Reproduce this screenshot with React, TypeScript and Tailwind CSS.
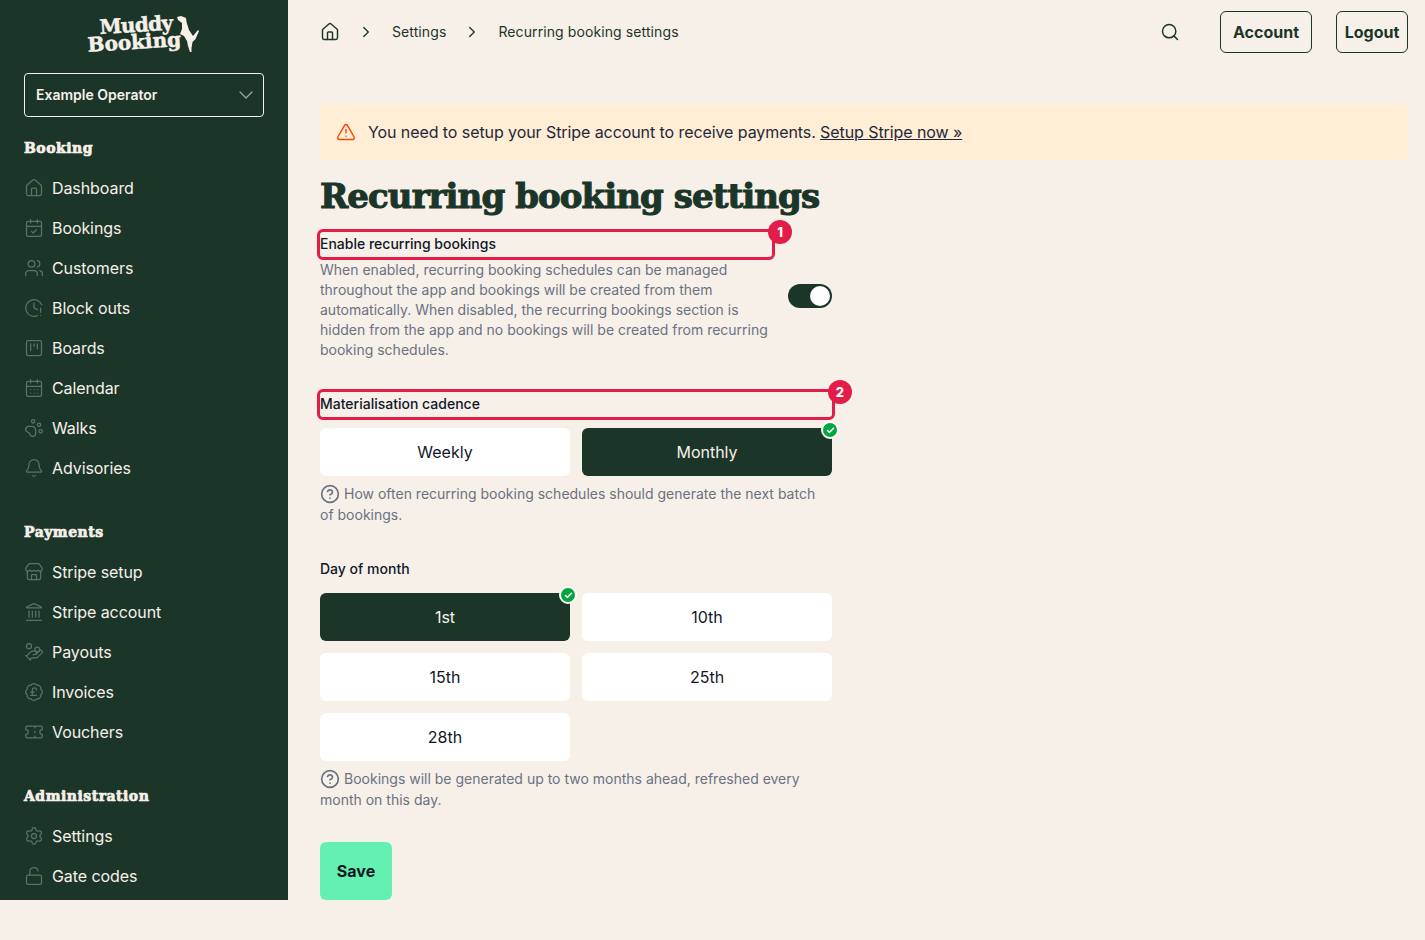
import {
  House,
  CalendarCheck,
  Users,
  ClockAlert,
  CalendarDays,
  PawPrint,
  Bell,
  Store,
  Landmark,
  HandCoins,
  BadgePoundSterling,
  Ticket,
  Settings,
  LockOpen,
  ChevronDown,
  ChevronRight,
  Search,
  TriangleAlert,
  CircleHelp,
  Check,
} from "lucide-react";

const displayFont = "font-['DejaVu_Serif',serif] font-bold";

function BoardIcon({ className }: { className?: string }) {
  return (
    <svg viewBox="0 0 24 24" fill="none" stroke="currentColor" strokeWidth="1.5" strokeLinecap="round" className={className}>
      <rect x="3" y="3" width="18" height="18" rx="2" />
      <path d="M8 7v8M12 7v3M16 7v6" />
    </svg>
  );
}

const sections = [
  {
    title: "Booking",
    items: [
      { label: "Dashboard", icon: House },
      { label: "Bookings", icon: CalendarCheck },
      { label: "Customers", icon: Users },
      { label: "Block outs", icon: ClockAlert },
      { label: "Boards", icon: BoardIcon },
      { label: "Calendar", icon: CalendarDays },
      { label: "Walks", icon: PawPrint },
      { label: "Advisories", icon: Bell },
    ],
  },
  {
    title: "Payments",
    items: [
      { label: "Stripe setup", icon: Store },
      { label: "Stripe account", icon: Landmark },
      { label: "Payouts", icon: HandCoins },
      { label: "Invoices", icon: BadgePoundSterling },
      { label: "Vouchers", icon: Ticket },
    ],
  },
  {
    title: "Administration",
    items: [
      { label: "Settings", icon: Settings },
      { label: "Gate codes", icon: LockOpen },
    ],
  },
];

function Logo() {
  return (
    <div className="flex h-[73px] items-center justify-center">
      <div className="relative h-[42px] w-[114px] text-[#f7f0e9]">
        <div className={`${displayFont} absolute left-0 top-[1px] -rotate-[3.5deg] text-[20px] leading-[17px] [-webkit-text-stroke:0.5px_#f7f0e9]`}>
          <div className="pl-[13px] tracking-[-0.7px]">Muddy</div>
          <div>Booking</div>
        </div>
        <svg viewBox="0 0 40 48" className="absolute left-[82px] top-[-6px] h-[48px] w-[40px]" fill="currentColor">
          <path d="M8 7 L12 6 L17 8 L17.500 12 L20 20 L24 26 L29 20 L30 21 L26.500 29 L23.500 32 L22.500 38 L22.500 42 L21 42 L19 36 L18 31 L15 26 L11 24 L13 19 L13 13 L9 10 Z" />
        </svg>
      </div>
    </div>
  );
}

function Sidebar() {
  return (
    <aside className="h-[900px] w-[288px] shrink-0 overflow-hidden bg-[#1b3629] px-6">
      <Logo />
      <div className="flex h-[44px] items-center justify-between rounded border border-[#f7f0e9] pl-[11px] pr-[5px]">
        <span className="text-sm font-semibold text-[#f7f0e9]">Example Operator</span>
        <ChevronDown className="size-6 text-[#9aa7a0]" strokeWidth={1.25} />
      </div>
      <div className="mt-[19px] flex flex-col gap-8">
        {sections.map((section) => (
          <div key={section.title}>
            <h3 className={`${displayFont} mb-2 flex h-6 items-center text-[14px] tracking-[0.5px] text-[#f7f0e9] [-webkit-text-stroke:0.7px_#f7f0e9]`}>
              {section.title}
            </h3>
            {section.items.map((item) => {
              const Icon = item.icon;
              return (
                <div key={item.label} className="flex h-10 items-center gap-2 text-base tracking-[-0.08px] text-[#f7f0e9]">
                  <Icon className="size-5 text-[#5a7367]" strokeWidth={1.5} />
                  <span>{item.label}</span>
                </div>
              );
            })}
          </div>
        ))}
      </div>
    </aside>
  );
}

function Header() {
  return (
    <header className="flex h-[64px] items-center text-[#1b3629]">
      <House className="size-5" strokeWidth={1.75} />
      <ChevronRight className="ml-[17px] size-[18px]" strokeWidth={1.75} />
      <span className="ml-[17px] text-sm tracking-[0.1px]">Settings</span>
      <ChevronRight className="ml-[17px] size-[18px]" strokeWidth={1.75} />
      <span className="ml-[17px] text-sm tracking-[0.1px]">Recurring booking settings</span>
      <Search className="ml-auto size-5" strokeWidth={1.75} />
      <button className="ml-[40px] h-[42px] w-[92px] rounded-md border border-[#1b3629] text-base font-bold">Account</button>
      <button className="ml-6 h-[42px] w-[72px] rounded-md border border-[#1b3629] text-base font-bold">Logout</button>
    </header>
  );
}

function CheckDot() {
  return (
    <span className="absolute -right-[7px] -top-[7px] flex size-[18px] items-center justify-center rounded-full border-2 border-white bg-green-600 text-white">
      <Check className="size-[9px]" strokeWidth={4} />
    </span>
  );
}

function Choice({ label, selected }: { label: string; selected?: boolean }) {
  return (
    <button className={`relative h-12 rounded-md text-base ${selected ? "bg-[#1b3629] text-[#f7f0e9]" : "bg-white text-gray-900"}`}>
      {label}
      {selected && <CheckDot />}
    </button>
  );
}

function MarkedLabel({ label, n, className }: { label: string; n: number; className: string }) {
  return (
    <div className={`relative h-[25px] rounded-[3px] pt-0.5 text-sm font-medium text-gray-900 outline-[3px] outline-[#e11d48] ${className}`}>
      {label}
      <span className="absolute -right-[20px] -top-3 flex size-6 items-center justify-center rounded-full bg-[#e11d48] text-[13px] font-extrabold text-white">
        {n}
      </span>
    </div>
  );
}

function Help({ text }: { text: string }) {
  return (
    <p className="text-sm leading-[21px] text-gray-500">
      <CircleHelp className="mr-1 inline-block size-5 align-[-5px] text-gray-500" strokeWidth={2} />
      {text}
    </p>
  );
}

export default function App() {
  return (
    <div className="flex min-h-screen items-start bg-[#f7f0e9] font-['Inter',sans-serif]">
      <Sidebar />
      <main className="min-w-0 flex-1 pl-8 pr-[17px]">
        <Header />
        <div className="mt-10 flex h-14 items-center gap-3 rounded-md bg-[#ffedd5] px-4 text-base tracking-[-0.08px] text-gray-800">
          <TriangleAlert className="size-5 text-orange-600" strokeWidth={1.75} />
          <span>
            You need to setup your Stripe account to receive payments.{" "}
            <a className="underline">Setup Stripe now »</a>
          </span>
        </div>
        <h1 className={`${displayFont} mt-[14px] h-[58px] text-[34px] leading-[44px] tracking-[-0.92px] text-[#1b3629] [-webkit-text-stroke:1.1px_#1b3629]`}>
          Recurring booking settings
        </h1>
        <div className="w-[512px]">
          <div className="flex items-center gap-[15px]">
            <div className="w-[453px]">
              <MarkedLabel label="Enable recurring bookings" n={1} className="w-[452px]" />
              <p className="mt-[3px] text-sm leading-5 text-gray-500">
                When enabled, recurring booking schedules can be managed throughout the app and bookings will be created from them automatically. When disabled, the recurring bookings section is hidden from the app and no bookings will be created from recurring booking schedules.
              </p>
            </div>
            <div className="flex h-6 w-11 items-center justify-end rounded-full bg-[#1b3629] p-0.5">
              <span className="size-5 rounded-full bg-white" />
            </div>
          </div>

          <MarkedLabel label="Materialisation cadence" n={2} className="mt-8 w-[512px]" />
          <div className="mt-[11px] grid grid-cols-2 gap-3">
            <Choice label="Weekly" />
            <Choice label="Monthly" selected />
          </div>
          <div className="mt-[7px]">
            <Help text="How often recurring booking schedules should generate the next batch of bookings." />
          </div>

          <div className="mt-[34px] text-sm font-medium leading-5 text-gray-900">Day of month</div>
          <div className="mt-[14px] grid grid-cols-2 gap-3">
            <Choice label="1st" selected />
            <Choice label="10th" />
            <Choice label="15th" />
            <Choice label="25th" />
            <Choice label="28th" />
          </div>
          <div className="mt-[7px]">
            <Help text="Bookings will be generated up to two months ahead, refreshed every month on this day." />
          </div>
          <button className="mt-8 h-[58px] w-[72px] rounded-md bg-[#64f0b0] text-base font-bold text-gray-900">Save</button>
        </div>
      </main>
    </div>
  );
}
